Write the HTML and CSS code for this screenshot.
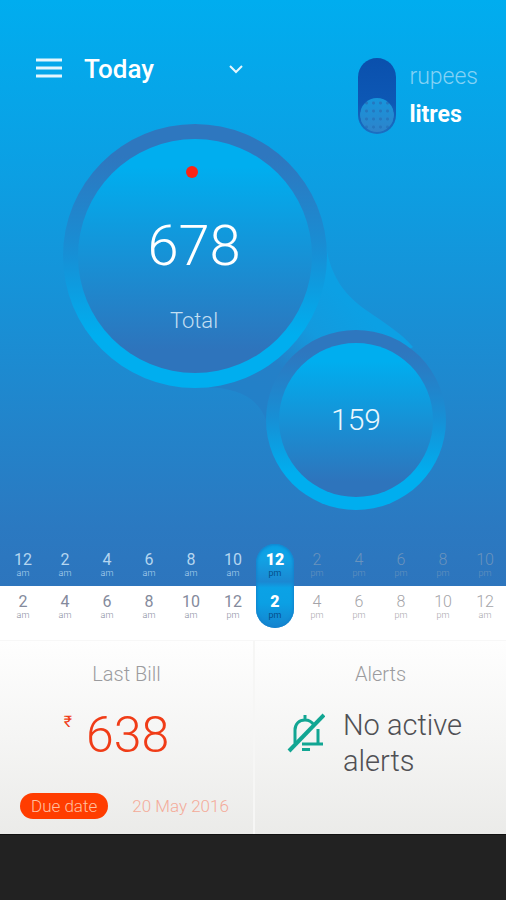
FILE: index.html
```html
<!DOCTYPE html>
<html lang="en">
<head>
  <meta charset="UTF-8">
  <meta name="viewport" content="width=device-width, initial-scale=1">
  <title>Water usage</title>
  <link rel="stylesheet" href="styles.css">
</head>
<body>
<main class="usage">
  <header class="topbar">
    <button class="menu" type="button" aria-label="Menu">
      <svg width="28" height="20" viewBox="0 0 28 20">
        <path d="M1 2h26M1 10h26M1 18h26" />
      </svg>
    </button>
    <div class="period">
      <select aria-label="Period">
        <option>Today</option>
        <option>Week</option>
        <option>Month</option>
      </select>
      <svg class="chevron" width="16" height="10" viewBox="0 0 16 10">
        <path d="M2 2l6 6 6-6" />
      </svg>
    </div>
    <label class="unit">
      <input type="checkbox" role="switch" checked>
      <span class="unit-names">
        <span class="off">rupees</span>
        <span class="on">litres</span>
      </span>
    </label>
  </header>

  <svg class="bubbles" viewBox="0 0 506 400" role="img" aria-label="678 total, 159 selected">
    <defs>
      <linearGradient id="fill" x1="0" y1="0" x2="0" y2="1">
        <stop offset="0.12" stop-color="#00aeef" />
        <stop offset="0.9" stop-color="#2e74bc" />
      </linearGradient>
      <linearGradient id="ring" x1="0" y1="0" x2="0" y2="1">
        <stop offset="0.12" stop-color="#2e77bf" />
        <stop offset="0.5" stop-color="#1690d6" />
        <stop offset="0.8" stop-color="#00aeef" />
      </linearGradient>
      <linearGradient id="link" gradientUnits="userSpaceOnUse" x1="340" y1="180" x2="240" y2="300">
        <stop offset="0" stop-color="#0ca0e4" />
        <stop offset="0.3" stop-color="#139ade" />
        <stop offset="0.6" stop-color="#2480c8" />
        <stop offset="1" stop-color="#2280c8" />
      </linearGradient>
    </defs>
    <path fill="url(#link)" d="M325 122C328 158 343 179 366 195C386 209 400 217 413 232L290 300L267 308C260 284 240 273 205 272Z" />
    <circle cx="195" cy="141" r="132" fill="url(#ring)" />
    <circle cx="195" cy="141" r="117" fill="url(#fill)" />
    <circle cx="192" cy="57" r="6" fill="#fb2415" />
    <text class="total" x="194" y="150">678</text>
    <text class="caption" x="194" y="213">Total</text>
    <circle cx="356" cy="305" r="90" fill="url(#ring)" />
    <circle cx="356" cy="305" r="77" fill="url(#fill)" />
    <text class="part" x="356" y="315">159</text>
  </svg>
</main>

<nav class="timeline" aria-label="Time of day">
  <button type="button"><b>12</b><i>am</i><b>2</b><i>am</i></button>
  <button type="button"><b>2</b><i>am</i><b>4</b><i>am</i></button>
  <button type="button"><b>4</b><i>am</i><b>6</b><i>am</i></button>
  <button type="button"><b>6</b><i>am</i><b>8</b><i>am</i></button>
  <button type="button"><b>8</b><i>am</i><b>10</b><i>am</i></button>
  <button type="button"><b>10</b><i>am</i><b>12</b><i>pm</i></button>
  <button type="button" class="active" aria-current="time"><b>12</b><i>pm</i><b>2</b><i>pm</i></button>
  <button type="button" class="later"><b>2</b><i>pm</i><b>4</b><i>pm</i></button>
  <button type="button" class="later"><b>4</b><i>pm</i><b>6</b><i>pm</i></button>
  <button type="button" class="later"><b>6</b><i>pm</i><b>8</b><i>pm</i></button>
  <button type="button" class="later"><b>8</b><i>pm</i><b>10</b><i>pm</i></button>
  <button type="button" class="later"><b>10</b><i>pm</i><b>12</b><i>am</i></button>
</nav>

<div class="cards">
  <section class="card bill">
    <h2>Last Bill</h2>
    <div class="amount"><span class="currency">₹</span>638</div>
    <div class="due">
      <span class="badge">Due date</span>
      <span class="date">20 May 2016</span>
    </div>
  </section>
  <section class="card alerts">
    <h2>Alerts</h2>
    <div class="message">
      <svg width="38" height="40" viewBox="0 0 38 40">
        <path d="M8 30V17C8 11 12 7 18 7C22 7 25 9 27 12M18 7V2M31 16V31M15 31H36" />
        <path d="M15 36.500h8" />
        <path class="slash" d="M2 38L37 2" />
      </svg>
      <p>No active alerts</p>
    </div>
  </section>
</div>
<footer class="bottom"></footer>
</body>
</html>
```

FILE: styles.css
```css
* {
    box-sizing: border-box;
}

body {
    display: flex;
    flex-direction: column;
    min-height: 100vh;
    margin: 0;
    font-family: Roboto, "Noto Sans", sans-serif;
    background: #fff;
}

button {
    padding: 0;
    border: 0;
    font-family: inherit;
    background: none;
}

.usage {
    padding: 58px 0 71px;
    background: linear-gradient(#00adef, #0c9fe3 30%, #2b79c1 90%, #2d75bd);
}

.topbar {
    display: flex;
    align-items: flex-start;
    height: 57px;
    padding: 0 28px 0 35px;
    color: #fff;
}

.menu {
    display: flex;
}

.menu path {
    fill: none;
    stroke: #e4f6fd;
    stroke-width: 3;
}

.period {
    display: flex;
    align-items: center;
    margin: -5px 0 0 21px;
}

.period select {
    width: 144px;
    height: 32px;
    padding: 0;
    border: 0;
    appearance: none;
    font: 500 26px/32px Roboto, sans-serif;
    color: #fff;
    background: none;
}

.chevron path {
    fill: none;
    stroke: #e4f6fd;
    stroke-width: 2;
}

.unit {
    display: flex;
    gap: 13px;
    margin-left: auto;
}

.unit input {
    display: flex;
    align-items: flex-end;
    width: 38px;
    height: 76px;
    margin: 0;
    padding: 2px;
    border-radius: 20px;
    appearance: none;
    background: linear-gradient(#0a50ad, #0d58b5 60%, #1c6fc2);
}

.unit input::before {
    content: "";
    width: 34px;
    height: 34px;
    border-radius: 50%;
    background:
        radial-gradient(circle, #2577bf 1px, transparent 2px) 3px 1px / 7px 8px,
        linear-gradient(#1696dc, #2e83cb);
}

.unit input:not(:checked) {
    align-items: flex-start;
}

.unit-names {
    display: flex;
    flex-direction: column;
    font-size: 23px;
    line-height: 38px;
}

.unit-names .off {
    font-weight: 300;
    color: #84d2f5;
}

.unit-names .on {
    font-weight: 700;
}

.bubbles {
    display: block;
    width: 100%;
}

.bubbles text {
    text-anchor: middle;
    fill: #eaf7fd;
}

.bubbles .total {
    font-size: 56px;
    font-weight: 300;
    fill: #fff;
}

.bubbles .caption {
    font-size: 22px;
    fill: #c3dff2;
    font-weight: 300;
}

.bubbles .part {
    font-size: 30px;
    font-weight: 300;
}

/* overlaps the blue area by half its height */
.timeline {
    position: relative;
    display: grid;
    grid-template-columns: repeat(12, 1fr);
    margin: -42px 0 12px;
    padding-left: 2px;
}

.timeline button {
    display: grid;
    grid-template-rows: 16px 26px 16px 10px;
    justify-self: center;
    justify-items: center;
    align-content: start;
    width: 38px;
    height: 84px;
    padding-top: 8px;
    border-radius: 20px;
    color: #848a9c;
}

.timeline b {
    font-size: 16px;
    line-height: 16px;
    font-weight: 400;
}

.timeline i {
    font-size: 9px;
    line-height: 10px;
    font-style: normal;
    font-weight: 300;
}

.timeline b:nth-child(-n+2),
.timeline i:nth-child(-n+2) {
    color: #b5d6f0;
}

.timeline .later {
    color: #a4a4a8;
}

.timeline .later b {
    font-weight: 300;
}

.timeline .later b:nth-child(-n+2),
.timeline .later i:nth-child(-n+2) {
    color: #6a93bd;
}

.timeline .active {
    background: linear-gradient(#08a4e8, #12a0e3 20%, #1b88d2 45%, #0ba2e6 52%, #0ba0e4 70%, #1683ce);
    box-shadow: inset 0 0 3px 1px #1280cc;
}

.timeline .active b:nth-child(n) {
    font-weight: 900;
    color: #fff;
}

.timeline .active i:nth-child(n) {
    color: #07508c;
    font-weight: 400;
}

.cards {
    display: grid;
    grid-template-columns: 1fr 1fr;
    border-top: 1px solid #f7f7f7;
    background: linear-gradient(#fefefe, #f5f5f4 50%, #ebebe9);
}

.card {
    padding: 20px 20px 15px;
}

.card + .card {
    border-left: 2px solid #f6f6f5;
}

.card h2 {
    margin: 0;
    font-size: 20px;
    line-height: 26px;
    font-weight: 300;
    text-align: center;
    color: #9b9b9e;
}

.amount {
    display: flex;
    justify-content: center;
    gap: 14px;
    margin: 18px 20px 0 0;
    font-size: 50px;
    line-height: 60px;
    font-weight: 300;
    color: #f03c17;
}

.currency {
    font-size: 16px;
    line-height: 34px;
    font-weight: 400;
}

.due {
    display: flex;
    align-items: center;
    gap: 24px;
    margin-top: 28px;
    font-size: 17px;
    line-height: 26px;
    font-weight: 300;
    white-space: nowrap;
}

.badge {
    padding: 0 11px;
    border-radius: 13px;
    color: #ffc0a2;
    background: #ff3d00;
}

.date {
    color: #f4ab99;
}

.message {
    display: flex;
    gap: 18px;
    margin-top: 20px;
    padding-left: 12px;
}

.message svg {
    flex: none;
    margin-top: 6px;
}

.message path {
    fill: none;
    stroke: #12a693;
    stroke-width: 3;
}

.message .slash {
    stroke-width: 4;
}

.message p {
    width: 130px;
    margin: 0;
    font-size: 29px;
    line-height: 36px;
    font-weight: 300;
    color: #505054;
}

.bottom {
    flex: 1;
    border-top: 1px solid #111;
    background: #222;
}
```
